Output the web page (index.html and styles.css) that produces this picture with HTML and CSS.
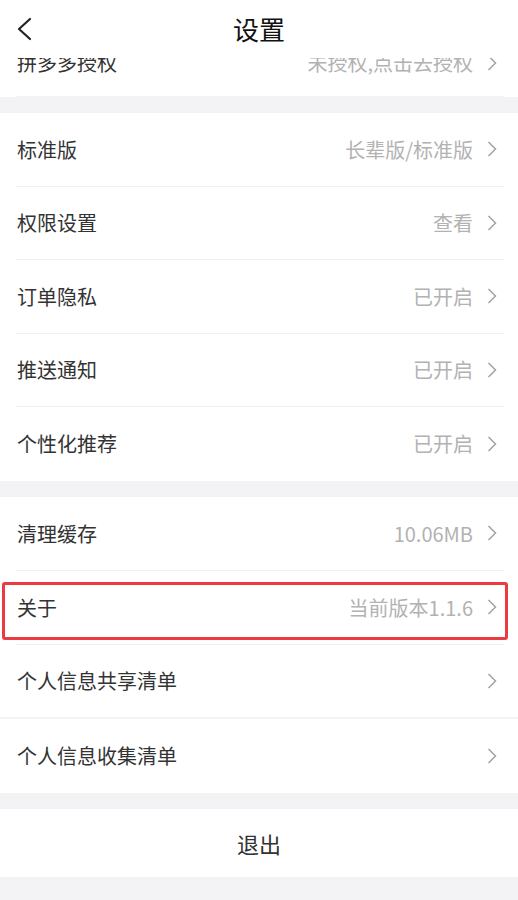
FILE: index.html
```html
<!DOCTYPE html>
<html lang="zh-CN">
<head>
<meta charset="utf-8">
<title>设置</title>
<link rel="stylesheet" href="styles.css">
</head>
<body>
<div class="screen">
  <header class="topbar">
    <span class="back">
      <svg width="16" height="24" viewBox="0 0 16 24"><polyline points="14,2 3,12 14,22" fill="none" stroke="#222" stroke-width="2.2" stroke-linecap="round" stroke-linejoin="round"/></svg>
    </span>
    <h1 class="title">设置</h1>
  </header>
  <main class="content">
    <section class="group group--scrolled">
      <div class="row row--first">
        <span class="label">拼多多授权</span>
        <span class="value">未授权,点击去授权</span>
        <svg class="chev" width="10" height="16" viewBox="0 0 10 16"><polyline points="1.5,1 8.5,8 1.5,15" fill="none" stroke="#a3a3a3" stroke-width="1.5"/></svg>
      </div>
    </section>
    <section class="group group--dense">
      <div class="row">
        <span class="label">标准版</span>
        <span class="value">长辈版/标准版</span>
        <svg class="chev" width="10" height="16" viewBox="0 0 10 16"><polyline points="1.5,1 8.5,8 1.5,15" fill="none" stroke="#a3a3a3" stroke-width="1.5"/></svg>
      </div>
      <div class="row">
        <span class="label">权限设置</span>
        <span class="value">查看</span>
        <svg class="chev" width="10" height="16" viewBox="0 0 10 16"><polyline points="1.5,1 8.5,8 1.5,15" fill="none" stroke="#a3a3a3" stroke-width="1.5"/></svg>
      </div>
      <div class="row">
        <span class="label">订单隐私</span>
        <span class="value">已开启</span>
        <svg class="chev" width="10" height="16" viewBox="0 0 10 16"><polyline points="1.5,1 8.5,8 1.5,15" fill="none" stroke="#a3a3a3" stroke-width="1.5"/></svg>
      </div>
      <div class="row">
        <span class="label">推送通知</span>
        <span class="value">已开启</span>
        <svg class="chev" width="10" height="16" viewBox="0 0 10 16"><polyline points="1.5,1 8.5,8 1.5,15" fill="none" stroke="#a3a3a3" stroke-width="1.5"/></svg>
      </div>
      <div class="row">
        <span class="label">个性化推荐</span>
        <span class="value">已开启</span>
        <svg class="chev" width="10" height="16" viewBox="0 0 10 16"><polyline points="1.5,1 8.5,8 1.5,15" fill="none" stroke="#a3a3a3" stroke-width="1.5"/></svg>
      </div>
    </section>
    <section class="group">
      <div class="row">
        <span class="label">清理缓存</span>
        <span class="value">10.06MB</span>
        <svg class="chev" width="10" height="16" viewBox="0 0 10 16"><polyline points="1.5,1 8.5,8 1.5,15" fill="none" stroke="#a3a3a3" stroke-width="1.5"/></svg>
      </div>
      <div class="row row--marked">
        <span class="label">关于</span>
        <span class="value">当前版本1.1.6</span>
        <svg class="chev" width="10" height="16" viewBox="0 0 10 16"><polyline points="1.5,1 8.5,8 1.5,15" fill="none" stroke="#a3a3a3" stroke-width="1.5"/></svg>
        <span class="highlight"></span>
      </div>
      <div class="row row--full">
        <span class="label">个人信息共享清单</span>
        <span class="value"></span>
        <svg class="chev" width="10" height="16" viewBox="0 0 10 16"><polyline points="1.5,1 8.5,8 1.5,15" fill="none" stroke="#a3a3a3" stroke-width="1.5"/></svg>
      </div>
      <div class="row">
        <span class="label">个人信息收集清单</span>
        <span class="value"></span>
        <svg class="chev" width="10" height="16" viewBox="0 0 10 16"><polyline points="1.5,1 8.5,8 1.5,15" fill="none" stroke="#a3a3a3" stroke-width="1.5"/></svg>
      </div>
    </section>
    <section class="group">
      <div class="logout">退出</div>
    </section>
  </main>
</div>
</body>
</html>
```

FILE: styles.css
```css
* { box-sizing: border-box; }

html, body {
  margin: 0;
  padding: 0;
  background: #f3f2f5;
}

body {
  font-family: "Noto Sans CJK SC", "Noto Sans", sans-serif;
  color: #333;
}

.screen {
  width: 518px;
  height: 900px;
  display: flex;
  flex-direction: column;
  overflow: hidden;
  background: #f3f2f5;
}

.topbar {
  height: 58px;
  flex: none;
  background: #fff;
  display: grid;
  grid-template-columns: 1fr auto 1fr;
  align-items: center;
  position: relative;
  z-index: 2;
}

.back {
  display: flex;
  align-items: center;
  padding-left: 16px;
}

.back svg { display: block; }

.title {
  margin: 0;
  font-size: 26px;
  font-weight: 400;
  color: #111;
  line-height: 1;
}

.content {
  flex: 1;
  overflow: hidden;
  display: flex;
  flex-direction: column;
  gap: 16px;
}

.group {
  background: #fff;
  display: flex;
  flex-direction: column;
}

.group--scrolled {
  margin-top: -35px;
}

.row {
  height: 74px;
  margin: 0 14px 0 16px;
  padding: 0 7px 0 1px;
  display: flex;
  align-items: center;
  border-bottom: 1px solid #f1f1f1;
  position: relative;
  flex: none;
}

.row:last-child { border-bottom: none; }

.group--dense .row { height: 73.5px; }

.row--first {
  padding-top: 6px;
}

.group--scrolled .row:last-child { border-bottom: 1px solid #f1f1f1; }

.row--full {
  margin: 0;
  padding: 0 21px 0 17px;
  border-bottom: 2px solid #f3f2f5;
}

.label {
  font-size: 20px;
  color: #333;
  flex: 1;
  white-space: nowrap;
}

.value {
  font-size: 20px;
  color: #b2b2b2;
  white-space: nowrap;
  margin-right: 14px;
}

.chev {
  display: block;
  flex: none;
}

.highlight {
  position: absolute;
  left: -14px;
  right: -4px;
  top: 11px;
  bottom: 4px;
  border: 3px solid #ec3a41;
  border-radius: 3px;
  pointer-events: none;
}

.logout {
  height: 68px;
  display: flex;
  align-items: center;
  justify-content: center;
  font-size: 22px;
  color: #333;
}
```
